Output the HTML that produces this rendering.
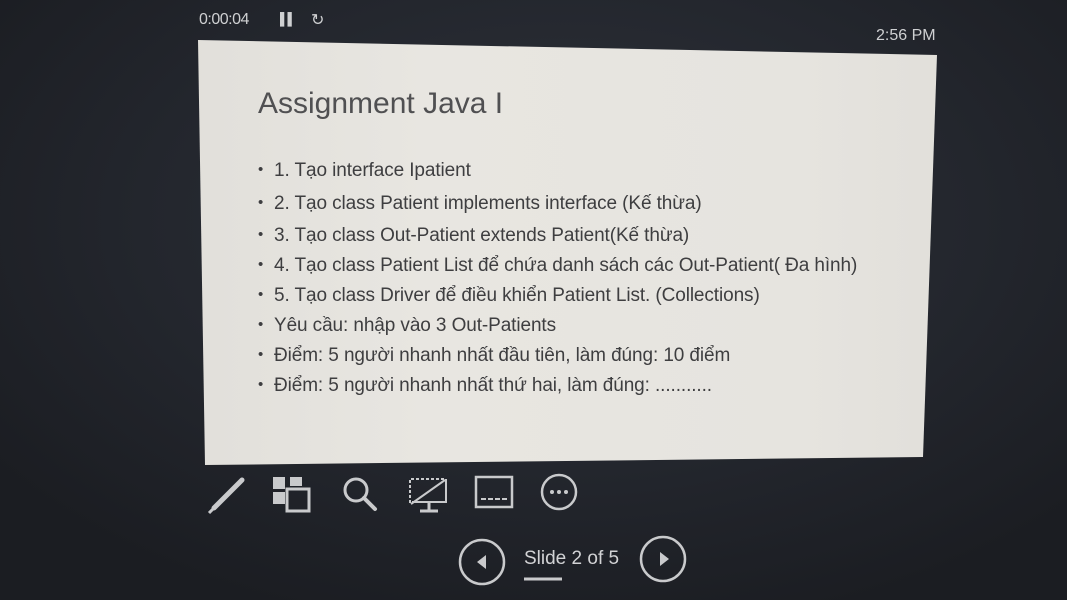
<!DOCTYPE html>
<html><head><meta charset="utf-8"><style>
html,body{margin:0;padding:0}
body{width:1067px;height:600px;overflow:hidden;position:relative;font-family:"Liberation Sans","DejaVu Sans",sans-serif;
background:radial-gradient(ellipse 700px 420px at 560px 220px,#2e323a 0%,#23262d 60%,#1b1d22 100%);}
.slide{position:absolute;left:0;top:0;width:1067px;height:600px;background:linear-gradient(90deg,#dcdad5 0%,#e8e6e1 40%,#e6e4df 75%,#dddbd6 100%);
clip-path:polygon(198px 40px,937px 55px,923px 457px,205px 465px);}
.t{position:absolute;color:#cfd0d2;font-size:16px;}
.b{position:absolute;left:262px;color:#3e3e40;font-size:19px;white-space:nowrap;letter-spacing:-0.1px}
.b:before{content:"•";position:absolute;left:-4px;font-size:15px;top:1px}
.b span{margin-left:12px}
svg{position:absolute}
</style></head><body>
<div class="slide"></div>
<div class="t" style="left:199px;top:11px;letter-spacing:-0.5px">0:00:04</div>
<div class="t" style="left:280px;top:12px;font-weight:bold;font-size:12px;letter-spacing:-1px">▌▌</div>
<div class="t" style="left:311px;top:10px;">↻</div>
<div class="t" style="left:876px;top:27px;">2:56 PM</div>
<div style="position:absolute;left:258px;top:87px;font-size:30px;color:#505052;">Assignment Java I</div>
<div class="b" style="top:160px"><span>1. Tạo interface Ipatient</span></div>
<div class="b" style="top:193px"><span>2. Tạo class Patient implements interface (Kế thừa)</span></div>
<div class="b" style="top:225px"><span>3. Tạo class Out-Patient extends Patient(Kế thừa)</span></div>
<div class="b" style="top:255px"><span>4. Tạo class Patient List để chứa danh sách các Out-Patient( Đa hình)</span></div>
<div class="b" style="top:285px"><span>5. Tạo class Driver để điều khiển Patient List. (Collections)</span></div>
<div class="b" style="top:315px"><span>Yêu cầu: nhập vào 3 Out-Patients</span></div>
<div class="b" style="top:345px"><span>Điểm: 5 người nhanh nhất đầu tiên, làm đúng: 10 điểm</span></div>
<div class="b" style="top:375px"><span>Điểm: 5 người nhanh nhất thứ hai, làm đúng: ...........</span></div>
<svg width="1067" height="600" style="left:0;top:0" fill="none" stroke="#c9cacc" stroke-width="3">
<path d="M242 480 L214 508" stroke-width="5" stroke-linecap="round"/>
<path d="M214 508 L209 513" stroke-width="3"/>
<rect x="273" y="477" width="12" height="12" fill="#c9cacc" stroke="none"/>
<rect x="290" y="477" width="12" height="9" fill="#c9cacc" stroke="none"/>
<rect x="273" y="492" width="12" height="12" fill="#c9cacc" stroke="none"/>
<rect x="287" y="489" width="22" height="22"/>
<circle cx="356" cy="490" r="11"/>
<path d="M364 498 L375 509" stroke-width="4" stroke-linecap="round"/>
<path d="M410 503 V479 H446" stroke-dasharray="3 2" stroke-width="2"/>
<path d="M446 479 V502 H412" stroke-width="2"/>
<path d="M445 480 L411 504" stroke-width="2"/>
<path d="M429 503 V510 M420 511 H438" stroke-width="3"/>
<rect x="476" y="477" width="36" height="30" stroke-width="2.5"/>
<path d="M481 499 H507" stroke-dasharray="5 2" stroke-width="2"/>
<circle cx="559" cy="492" r="17" stroke-width="2.5"/>
<circle cx="552" cy="492" r="2" fill="#c9cacc" stroke="none"/>
<circle cx="559" cy="492" r="2" fill="#c9cacc" stroke="none"/>
<circle cx="566" cy="492" r="2" fill="#c9cacc" stroke="none"/>
<circle cx="482" cy="562" r="22" stroke-width="2.5"/>
<path d="M477 562 L486 555 V569 Z" fill="#c9cacc" stroke="none"/>
<circle cx="663" cy="559" r="22" stroke-width="2.5"/>
<path d="M669 559 L660 552 V566 Z" fill="#c9cacc" stroke="none"/>
<path d="M524 579 H562" stroke-width="3"/>
</svg>
<div class="t" style="left:524px;top:548px;font-size:19px;color:#d2d3d5">Slide 2 of 5</div>
</body></html>
